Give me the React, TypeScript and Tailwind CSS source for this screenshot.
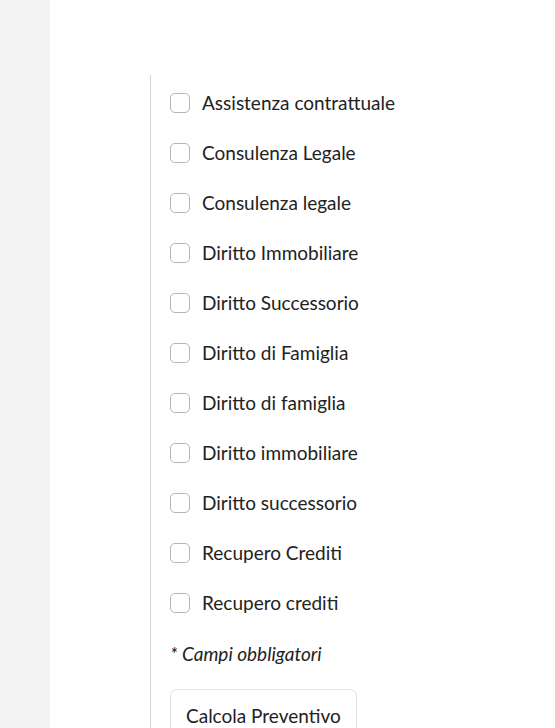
const services = [
  'Assistenza contrattuale',
  'Consulenza Legale',
  'Consulenza legale',
  'Diritto Immobiliare',
  'Diritto Successorio',
  'Diritto di Famiglia',
  'Diritto di famiglia',
  'Diritto immobiliare',
  'Diritto successorio',
  'Recupero Crediti',
  'Recupero crediti',
]

export default function App() {
  return (
    <div className="flex min-h-[728px] w-full font-['Lato',sans-serif] text-[19px] text-[#222]">
      <div className="w-[50px] shrink-0 bg-[#f4f4f4]" />
      <div className="flex-1 bg-white pl-[100px] pt-[75px]">
        <div className="flex flex-col border-l border-[#d4d4d4] pl-[19px] pt-[3px]">
          {services.map((s) => (
            <label key={s} className="flex h-[50px] items-center gap-[12px]">
              <input
                type="checkbox"
                className="h-[20px] w-[20px] appearance-none rounded-[5px] border border-[#b5b5b5] bg-white"
              />
              <span>{s}</span>
            </label>
          ))}
          <p className="flex h-[50px] items-center pt-[2px] italic">* Campi obbligatori</p>
          <div className="pt-[11px]">
            <button className="rounded-[7px] border border-[#e2e2e2] bg-white px-[15px] py-[14px] leading-[24px] text-[#222]">
              Calcola Preventivo
            </button>
          </div>
        </div>
      </div>
    </div>
  )
}
